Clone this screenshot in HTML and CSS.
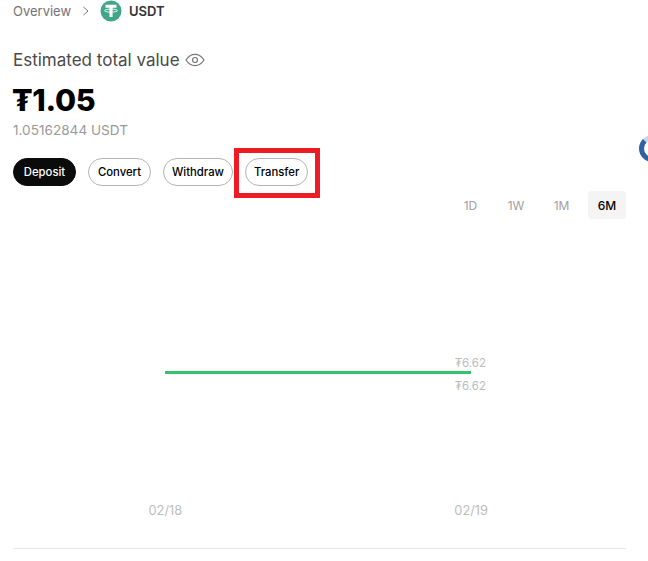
FILE: index.html
```html
<!DOCTYPE html>
<html lang="en">
<head>
<meta charset="utf-8">
<title>USDT</title>
<link rel="stylesheet" href="styles.css">
</head>
<body>
<main class="page">
  <nav class="crumbs">
    <span class="crumb-link">Overview</span>
    <svg class="chev" width="8" height="10" viewBox="0 0 8 10"><path d="M1.5 1l4.5 4-4.500 4" fill="none" stroke="#777" stroke-width="1"/></svg>
    <svg class="coin" width="22" height="22" viewBox="0 0 22 22"><circle cx="11" cy="11" r="10.5" fill="#3fa687"/><path d="M5.500 4.800h11v2.900h-3.900v9.300h-3.200v-9.300H5.500z" fill="#fff"/><ellipse cx="11" cy="10.600" rx="6.500" ry="1.500" fill="none" stroke="#fff" stroke-width=".9"/></svg>
    <span class="crumb-current">USDT</span>
  </nav>
  <div class="label-row">
    <span class="label">Estimated total value</span>
    <svg width="20" height="14" viewBox="0 0 20 14"><path d="M1 7c2.500-3.800 5.500-5.700 9-5.700s6.500 1.900 9 5.700c-2.500 3.800-5.500 5.700-9 5.700S3.500 10.800 1 7z" fill="none" stroke="#777" stroke-width="1.200"/><circle cx="10" cy="7" r="2.500" fill="none" stroke="#777" stroke-width="1.200"/></svg>
  </div>
  <div class="amount">₮1.05</div>
  <div class="sub">1.05162844 USDT</div>
  <div class="actions">
    <button class="btn btn-dark">Deposit</button>
    <button class="btn">Convert</button>
    <button class="btn">Withdraw</button>
    <button class="btn">Transfer</button>
  </div>
  <div class="ranges">
    <span class="range">1D</span>
    <span class="range">1W</span>
    <span class="range">1M</span>
    <span class="range range-on">6M</span>
  </div>
  <section class="chart">
    <span class="tick tick-high">₮6.62</span>
    <span class="series"></span>
    <span class="tick tick-low">₮6.62</span>
    <div class="dates"><span>02/18</span><span>02/19</span></div>
  </section>
</main>
<div class="highlight"></div>
<div class="float-badge"></div>
</body>
</html>
```
FILE: styles.css
```css
* { box-sizing: border-box; }
html, body { margin: 0; padding: 0; background: #fff; overflow: hidden; }
body { width: 648px; height: 561px; position: relative; font-family: Inter, "Liberation Sans", sans-serif; color: #000; }
.page { width: 626px; padding-left: 13px; }
.crumbs { display: flex; align-items: center; height: 22px; font-size: 13px; }
.crumb-link { color: #737373; width: 69px; }
.chev { margin-right: 10px; }
.coin { margin-right: 7px; }
.crumb-current { color: #333; font-weight: 600; font-size: 13px; }
.label-row { display: flex; align-items: center; gap: 5px; margin-top: 26px; height: 24px; }
.label { font-size: 17px; color: #4a4a4a; }
.amount { font-size: 30.500px; font-weight: 800; line-height: 38px; margin-top: 9px; margin-left: -1px; letter-spacing: -.3px; }
.sub { font-size: 13.600px; color: #9a9a9a; line-height: 18px; margin-top: 2px; }
.actions { display: flex; gap: 12px; margin-top: 19px; }
.btn { height: 28px; min-width: 63px; padding: 0 8px; border: 1px solid #b5b5b5; border-radius: 14px; background: #fff; font: 500 11.300px Inter, "Liberation Sans", sans-serif; color: #000; }
.btn-dark { background: #0b0b0b; border-color: #0b0b0b; color: #fff; }
.ranges { display: flex; justify-content: flex-end; margin-top: 5px; gap: 7.500px; }
.range { width: 38px; height: 28px; display: flex; align-items: center; justify-content: center; font-size: 12px; color: #a0a0a0; border-radius: 4px; }
.range-on { color: #000; font-weight: 500; background: #f4f4f4; }
.chart { position: relative; height: 330px; border-bottom: 1px solid #e5e5e5; }
.series { position: absolute; left: 152px; top: 152px; width: 306px; height: 3px; background: #35c26b; }
.tick { position: absolute; right: 140px; font-size: 11.500px; color: #bdbdbd; line-height: 14px; }
.tick-high { top: 137px; }
.tick-low { top: 160px; }
.dates { position: absolute; left: 135.500px; top: 285px; width: 339.500px; display: flex; justify-content: space-between; font-size: 12.800px; color: #bdbdbd; line-height: 14px; }
.highlight { position: absolute; left: 234px; top: 148px; width: 86px; height: 50px; border: 5px solid #ed1c24; }
.float-badge { position: absolute; left: 639px; top: 135px; width: 27px; height: 27px; border-radius: 50%; border: 5px solid #2f62a5; border-top-color: #c9d6e8; }
```
